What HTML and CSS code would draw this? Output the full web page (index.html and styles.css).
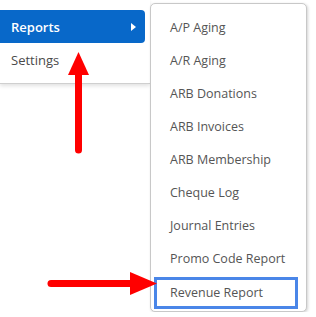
FILE: index.html
```html
<!DOCTYPE html>
<html lang="en">
<head>
  <meta charset="UTF-8">
  <title>Reports menu</title>
  <link rel="stylesheet" href="styles.css">
</head>
<body>

  <div class="menus">
    <div class="main-menu">
      <div class="menu-item active">Reports <span class="caret"></span></div>
      <div class="menu-item">Settings</div>
    </div>

    <ul class="submenu">
      <li>A/P Aging</li>
      <li>A/R Aging</li>
      <li>ARB Donations</li>
      <li>ARB Invoices</li>
      <li>ARB Membership</li>
      <li>Cheque Log</li>
      <li>Journal Entries</li>
      <li>Promo Code Report</li>
      <li class="highlight">Revenue Report</li>
    </ul>
  </div>

  <!-- red annotation arrows -->
  <svg class="arrows" width="316" height="317" viewBox="0 0 316 317">
    <line x1="78.5" y1="150" x2="78.5" y2="72" stroke="#ff0000" stroke-width="7" stroke-linecap="round"/>
    <polygon points="78.5,52 68,75 89,75" fill="#ff0000"/>
    <line x1="51" y1="283.5" x2="133" y2="283.5" stroke="#ff0000" stroke-width="7" stroke-linecap="round"/>
    <polygon points="157,283.5 130,272 130,295" fill="#ff0000"/>
  </svg>

</body>
</html>
```

FILE: styles.css
```css
body {
  margin: 0;
  font-family: "Open Sans", Arial, sans-serif;
  background: #fff;
}

.menus {
  display: flex;
  align-items: flex-start;
}

.main-menu {
  width: 150px;
  height: 73px;
  padding-top: 10px;
  background: #fff;
  border-bottom: 1px solid #cfcfcf;
  box-shadow: 0 2px 4px rgba(0, 0, 0, 0.12);
}

.menu-item {
  display: flex;
  align-items: center;
  justify-content: space-between;
  width: 145px;
  height: 33px;
  box-sizing: border-box;
  padding: 0 9px 0 11px;
  font-size: 13px;
  color: #4a4a4a;
}

.menu-item.active {
  background: #0868c9;
  color: #fff;
  font-weight: 600;
  border-radius: 0 4px 4px 0;
}

.caret {
  width: 0;
  height: 0;
  border-top: 4px solid transparent;
  border-bottom: 4px solid transparent;
  border-left: 5px solid #fff;
}

.submenu {
  list-style: none;
  margin: 3px 0 0 0;
  padding: 7px 0 2px 0;
  width: 157px;
  box-sizing: border-box;
  background: #fff;
  border: 1px solid #c8c8c8;
  border-radius: 5px;
  box-shadow: 1px 1px 3px rgba(0, 0, 0, 0.18);
  position: relative;
  z-index: 1;
}

.submenu li {
  height: 33px;
  line-height: 33px;
  padding-left: 19px;
  font-size: 12.5px;
  color: #555;
}

.submenu li.highlight {
  margin: 2px 8px 0 3px;
  padding-left: 13px;
  height: 32px;
  line-height: 26px;
  box-sizing: border-box;
  border: 3px solid #4a86e8;
}

.arrows {
  position: absolute;
  top: 0;
  left: 0;
  z-index: 2;
}
```
